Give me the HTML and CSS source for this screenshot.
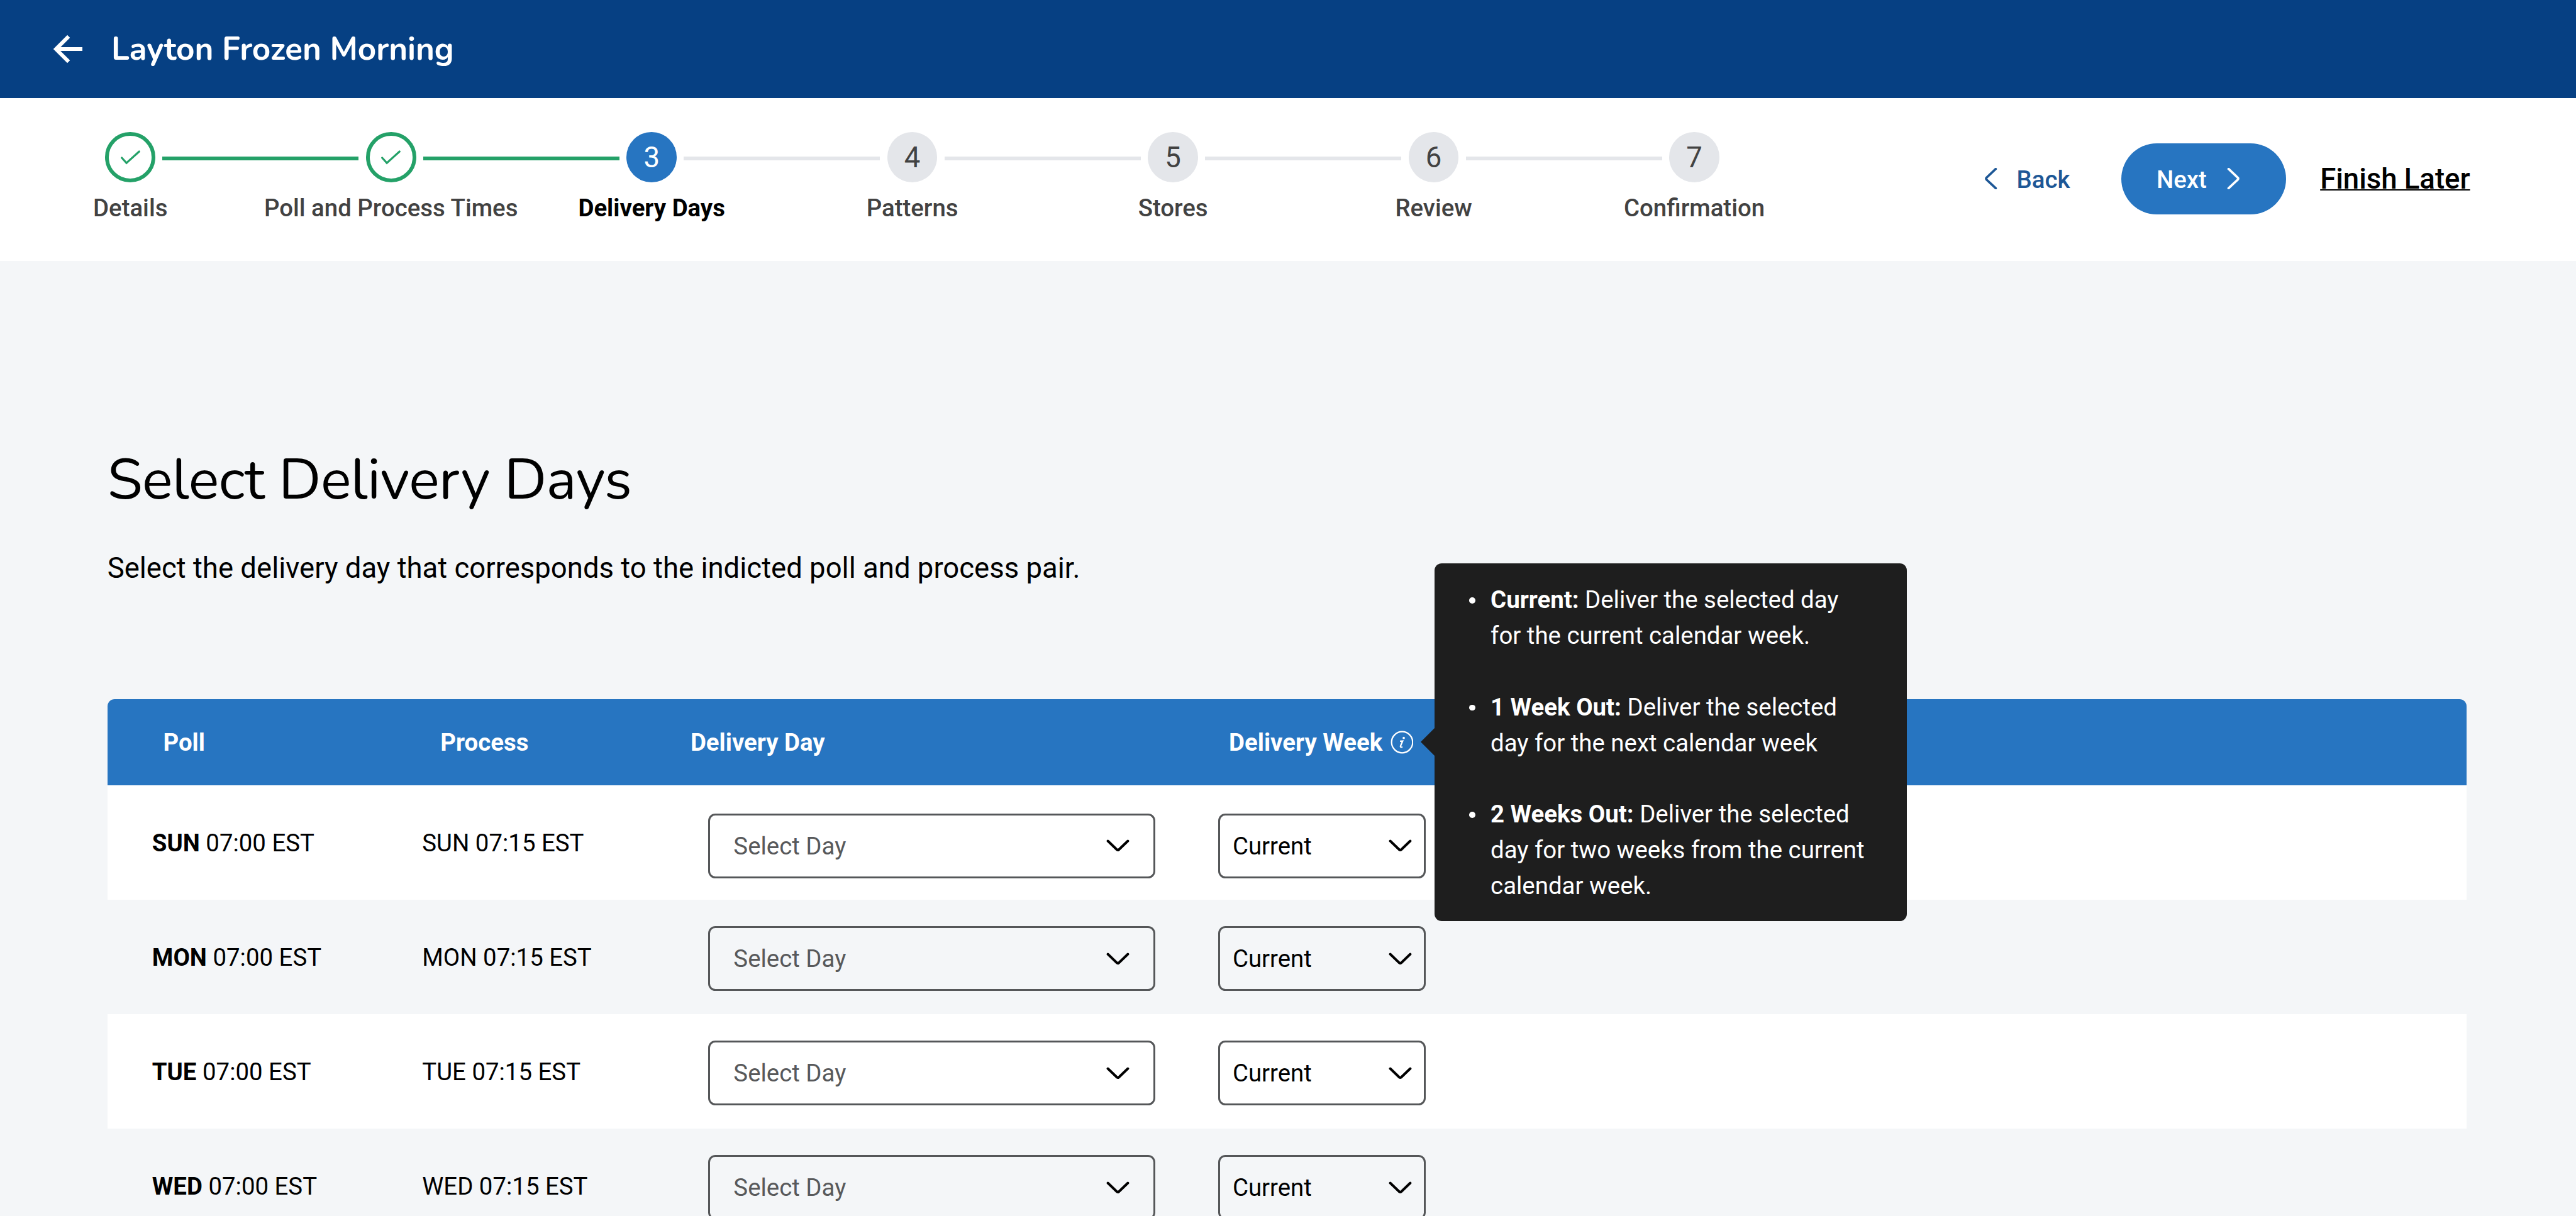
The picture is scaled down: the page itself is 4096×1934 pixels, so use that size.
FILE: index.html
```html
<!DOCTYPE html>
<html lang="en">
<head>
    <meta charset="UTF-8">
    <meta name="viewport" content="width=device-width, initial-scale=1.0">
    <title>Layton Frozen Morning</title>
    <link rel="stylesheet" href="styles.css">
</head>
<body>
    <header class="top-bar">
        <svg class="back-arrow" viewBox="0 0 16.2 16.2"><path d="M16.2 8.1H2M8.5 1L1.4 8.1L8.5 15.2"/></svg>
        <span class="top-title">Layton Frozen Morning</span>
    </header>

    <nav class="step-bar">
        <ol class="stepper">
            <li class="step done">
                <div class="marker"><svg class="check" viewBox="0 0 11 8"><path d="M0.6 4.2L3.2 7.1L10.3 0.7"/></svg></div>
                <span class="step-label">Details</span>
            </li>
            <li class="step done">
                <div class="marker"><svg class="check" viewBox="0 0 11 8"><path d="M0.6 4.2L3.2 7.1L10.3 0.7"/></svg></div>
                <span class="step-label">Poll and Process Times</span>
            </li>
            <li class="step active">
                <div class="marker">3</div>
                <span class="step-label">Delivery Days</span>
            </li>
            <li class="step">
                <div class="marker">4</div>
                <span class="step-label">Patterns</span>
            </li>
            <li class="step">
                <div class="marker">5</div>
                <span class="step-label">Stores</span>
            </li>
            <li class="step">
                <div class="marker">6</div>
                <span class="step-label">Review</span>
            </li>
            <li class="step">
                <div class="marker">7</div>
                <span class="step-label">Confirmation</span>
            </li>
        </ol>
        <div class="actions">
            <button type="button" class="back-btn">
                <svg class="chevron" viewBox="0 0 7 12"><path d="M6.1 0.6L0.9 5.5Q0.5 6 0.9 6.5L6.1 11.4"/></svg>
                <span class="btn-text">Back</span>
            </button>
            <button type="button" class="next-btn">
                <span class="btn-text">Next</span>
                <svg class="chevron" viewBox="0 0 7 12"><path d="M0.9 0.6L6.1 5.5Q6.5 6 6.1 6.5L0.9 11.4"/></svg>
            </button>
            <a class="finish-link">Finish Later</a>
        </div>
    </nav>

    <main class="content">
        <h1 class="page-title">Select Delivery Days</h1>
        <p class="page-text">Select the delivery day that corresponds to the indicted poll and process pair.</p>

        <div class="table">
            <div class="table-head">
                <div class="col-poll">Poll</div>
                <div class="col-process">Process</div>
                <div class="col-day">Delivery Day</div>
                <div class="col-week">
                    Delivery Week
                    <div class="info">
                        <svg class="info-icon" viewBox="0 0 13 13">
                            <circle cx="6.5" cy="6.5" r="5.9"/>
                            <path d="M5.3 5.9L6.8 5.8L5.6 8.6Q5.3 9.5 6.7 9.2"/>
                            <circle class="dot" cx="7.4" cy="4.1" r="0.65"/>
                        </svg>
                        <div class="tooltip">
                            <ul class="tooltip-list">
                                <li><b>Current:</b> Deliver the selected day<br>for the current calendar week.</li>
                                <li><b>1 Week Out:</b> Deliver the selected<br>day for the next calendar week</li>
                                <li><b>2 Weeks Out:</b> Deliver the selected<br>day for two weeks from the current<br>calendar week.</li>
                            </ul>
                        </div>
                    </div>
                </div>
            </div>
            <div class="table-row first">
                <div class="col-poll"><b>SUN</b> 07:00 EST</div>
                <div class="col-process">SUN 07:15 EST</div>
                <div class="select day-select">Select Day <svg class="caret" viewBox="0 0 13 7"><path d="M0.9 0.9L6 5.8Q6.5 6.2 7 5.8L12.1 0.9"/></svg></div>
                <div class="select week-select">Current <svg class="caret" viewBox="0 0 13 7"><path d="M0.9 0.9L6 5.8Q6.5 6.2 7 5.8L12.1 0.9"/></svg></div>
            </div>
            <div class="table-row">
                <div class="col-poll"><b>MON</b> 07:00 EST</div>
                <div class="col-process">MON 07:15 EST</div>
                <div class="select day-select">Select Day <svg class="caret" viewBox="0 0 13 7"><path d="M0.9 0.9L6 5.8Q6.5 6.2 7 5.8L12.1 0.9"/></svg></div>
                <div class="select week-select">Current <svg class="caret" viewBox="0 0 13 7"><path d="M0.9 0.9L6 5.8Q6.5 6.2 7 5.8L12.1 0.9"/></svg></div>
            </div>
            <div class="table-row">
                <div class="col-poll"><b>TUE</b> 07:00 EST</div>
                <div class="col-process">TUE 07:15 EST</div>
                <div class="select day-select">Select Day <svg class="caret" viewBox="0 0 13 7"><path d="M0.9 0.9L6 5.8Q6.5 6.2 7 5.8L12.1 0.9"/></svg></div>
                <div class="select week-select">Current <svg class="caret" viewBox="0 0 13 7"><path d="M0.9 0.9L6 5.8Q6.5 6.2 7 5.8L12.1 0.9"/></svg></div>
            </div>
            <div class="table-row">
                <div class="col-poll"><b>WED</b> 07:00 EST</div>
                <div class="col-process">WED 07:15 EST</div>
                <div class="select day-select">Select Day <svg class="caret" viewBox="0 0 13 7"><path d="M0.9 0.9L6 5.8Q6.5 6.2 7 5.8L12.1 0.9"/></svg></div>
                <div class="select week-select">Current <svg class="caret" viewBox="0 0 13 7"><path d="M0.9 0.9L6 5.8Q6.5 6.2 7 5.8L12.1 0.9"/></svg></div>
            </div>
        </div>
    </main>
</body>
</html>
```
FILE: styles.css
```css
/* 1rem = 10px on a 1440px wide layout */
html {
    font-size: calc(100vw / 144);
}
* {
    box-sizing: border-box;
}
body {
    margin: 0;
    height: 100vh;
    overflow: hidden;
    background-color: #f4f6f8;
    color: #000;
    font-family: Roboto, Arial, sans-serif;
    font-size: 1.35rem;
}
svg {
    display: block;
    flex: none;
    fill: none;
    stroke: currentColor;
}

/* top bar */
.top-bar {
    display: flex;
    align-items: center;
    height: 5.5rem;
    padding-left: 3rem;
    background-color: #064083;
    color: white;
}
.back-arrow {
    width: 1.62rem;
    height: 1.62rem;
    stroke-width: 2.1;
}
.top-title {
    margin-left: 1.6rem;
    font-family: Nunito, Lato, sans-serif;
    font-size: 1.8rem;
    font-weight: 700;
    letter-spacing: -0.004rem;
}

/* stepper */
.step-bar {
    display: flex;
    height: 9.1rem;
    background-color: white;
}
.stepper {
    display: flex;
    width: 102rem;
    margin: 0;
    padding: 1.9rem 0 0;
    list-style: none;
}
.step {
    position: relative;
    flex: 1;
    display: flex;
    flex-direction: column;
    align-items: center;
    color: #424242;
    font-weight: 500;
}
.marker {
    display: flex;
    align-items: center;
    justify-content: center;
    width: 2.8rem;
    height: 2.8rem;
    border-radius: 50%;
    background-color: #e4e6ea;
    font-size: 1.6rem;
    font-weight: 400;
}
.step-label {
    margin-top: 0.64rem;
    line-height: 1.6rem;
    white-space: nowrap;
}
/* connector to the next step */
.step:not(:last-child)::after {
    content: "";
    position: absolute;
    top: 1.34rem;
    left: calc(50% + 1.8rem);
    width: calc(100% - 3.6rem);
    height: 0.21rem;
    background-color: #e4e6ea;
}
.step.done::after {
    background-color: #24a168 !important;
}
.step.done .marker {
    border: 0.215rem solid #24a168;
    background-color: white;
    color: #24a168;
}
.check {
    width: 1.1rem;
    height: 0.8rem;
    stroke-width: 1.1;
    stroke-linecap: round;
}
.step.active {
    color: #000;
    font-weight: 700;
}
.step.active .marker {
    background-color: #2775c1;
    color: white;
}

/* buttons */
.actions {
    display: flex;
    align-items: center;
    height: 4rem;
    margin-top: 2.5rem;
    padding-left: 8.95rem;
}
.back-btn,
.next-btn {
    display: flex;
    align-items: center;
    padding: 0;
    border: none;
    background: none;
    font-family: inherit;
    font-size: 1.35rem;
    font-weight: 500;
    cursor: pointer;
}
.btn-text {
    padding-top: 0.08rem;
}
.back-btn {
    gap: 1.08rem;
    width: 7.65rem;
    color: #1d5796;
}
.next-btn {
    justify-content: space-between;
    width: 9.2rem;
    height: 4rem;
    padding: 0 2.6rem 0 1.95rem;
    border-radius: 2rem;
    background-color: #2775c1;
    color: white;
}
.chevron {
    width: 0.7rem;
    height: 1.2rem;
    stroke-width: 1.3;
    stroke-linecap: round;
}
.finish-link {
    margin-left: 1.9rem;
    font-size: 1.6rem;
    font-weight: 500;
    text-decoration: underline;
    text-decoration-thickness: 0.08rem;
}

/* page content */
.content {
    padding: 10.03rem 6rem 0;
}
.page-title {
    margin: 0;
    font-family: Nunito, Lato, sans-serif;
    font-size: 3.2rem;
    font-weight: 400;
    line-height: 4.4rem;
    letter-spacing: -0.022rem;
}
.page-text {
    margin: 1.57rem 0 6.1rem;
    font-size: 1.6rem;
    line-height: 2.4rem;
}

/* table */
.table {
    width: 131.9rem;
}
.table-head {
    display: flex;
    align-items: center;
    height: 4.8rem;
    border-radius: 0.4rem 0.4rem 0 0;
    background-color: #2775c1;
    color: white;
    font-weight: 700;
}
.table-head .col-poll {
    width: 18.62rem;
    padding-left: 3.12rem;
}
.table-head .col-process {
    width: 13.98rem;
}
.table-head .col-day {
    width: 30.1rem;
}
.col-week {
    display: flex;
    align-items: center;
    gap: 0.43rem;
}
.info {
    position: relative;
}
.info-icon {
    width: 1.3rem;
    height: 1.3rem;
    stroke-width: 0.8;
}
.info-icon .dot {
    fill: currentColor;
    stroke: none;
}
.table-row {
    display: flex;
    height: 6.4rem;
    padding-top: 1.5rem;
    line-height: 3.5rem;
}
.table-row:nth-child(even) {
    background-color: white;
}
.table-row .col-poll {
    width: 17.6rem;
    padding-left: 2.5rem;
}
.table-row .col-process {
    width: 16rem;
}
.select {
    display: flex;
    align-items: center;
    justify-content: space-between;
    height: 3.6rem;
    border: 3px solid #555759;
    border-radius: 0.4rem;
}
.first .select {
    position: relative;
    top: 0.1rem;
}
.day-select {
    width: 25rem;
    margin-right: 3.5rem;
    padding: 0 1.35rem 0 1.3rem;
    color: #58595b;
}
.week-select {
    width: 11.6rem;
    padding: 0 0.67rem 0 0.7rem;
}
.caret {
    width: 1.3rem;
    height: 0.7rem;
    color: #000;
    stroke-width: 1.4;
    stroke-linecap: round;
}

/* tooltip */
.tooltip {
    position: absolute;
    top: -9.35rem;
    left: 2.49rem;
    width: 26.4rem;
    height: 20rem;
    padding: 1.06rem 0 0 3.12rem;
    border-radius: 0.4rem;
    background-color: #1e1e1e;
    font-weight: 400;
    line-height: 2rem;
    white-space: nowrap;
}
.tooltip::before {
    content: "";
    position: absolute;
    top: 9.17rem;
    left: -0.79rem;
    border: solid transparent;
    border-width: 0.82rem 0.82rem 0.82rem 0;
    border-right-color: #1e1e1e;
}
.tooltip-list {
    margin: 0;
    padding: 0;
    list-style: none;
}
.tooltip-list li {
    position: relative;
    margin-bottom: 2rem;
}
.tooltip-list li::before {
    content: "";
    position: absolute;
    top: 0.84rem;
    left: -1.18rem;
    width: 0.34rem;
    height: 0.34rem;
    border-radius: 50%;
    background-color: white;
}
```
